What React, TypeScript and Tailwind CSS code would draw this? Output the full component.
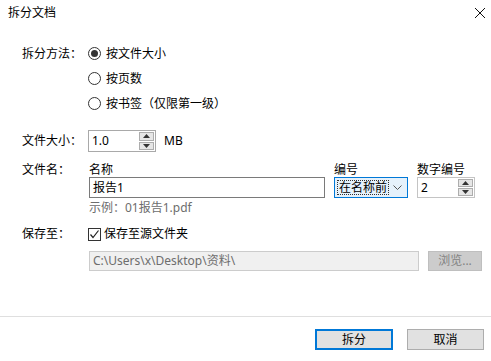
import React from 'react';

const FONT = '"Noto Sans", "Noto Sans CJK SC", sans-serif';

function Radio({ checked, label }: { checked?: boolean; label: string }) {
  return (
    <div className="h-[25px] flex items-center">
      <span className="w-[13px] h-[13px] rounded-full border border-[#333333] bg-white flex items-center justify-center">
        {checked && <span className="w-[7px] h-[7px] rounded-full bg-[#333333]" />}
      </span>
      <span className="ml-[5px] leading-[14px]">{label}</span>
    </div>
  );
}

function SpinButtons() {
  return (
    <div className="w-[16px] h-full flex flex-col gap-[1px] py-[1px] pr-[1px]">
      <div className="flex-1 bg-[#e6e6e6] border border-[#adadad] flex items-center justify-center">
        <svg width="7" height="4" viewBox="0 0 7 4">
          <path d="M0 4 L3.5 0 L7 4 Z" fill="#333" />
        </svg>
      </div>
      <div className="flex-1 bg-[#e6e6e6] border border-[#adadad] flex items-center justify-center">
        <svg width="7" height="4" viewBox="0 0 7 4">
          <path d="M0 0 L3.5 4 L7 0 Z" fill="#333" />
        </svg>
      </div>
    </div>
  );
}

export default function App() {
  return (
    <div
      className="w-[491px] h-[361px] bg-white text-[12px] text-black flex flex-col overflow-hidden"
      style={{ fontFamily: FONT }}
    >
      {/* Title bar */}
      <div className="h-[25px] flex items-center justify-between pl-[8px] pr-[3px]">
        <span className="leading-[14px]">拆分文档</span>
        <svg width="12" height="12" viewBox="0 0 12 12" className="mr-[2px]">
          <path d="M1 1 L11 11 M11 1 L1 11" stroke="#111" strokeWidth="1" />
        </svg>
      </div>

      <div className="flex-1 pl-[22px] pt-[16px]">
        {/* Split method */}
        <div className="flex">
          <div className="w-[66px] h-[25px] flex items-center leading-[14px]">拆分方法：</div>
          <div className="flex flex-col">
            <Radio checked label="按文件大小" />
            <Radio label="按页数" />
            <Radio label="按书签（仅限第一级）" />
          </div>
        </div>

        {/* File size */}
        <div className="flex items-center mt-[14px] h-[22px]">
          <div className="w-[66px] leading-[14px]">文件大小：</div>
          <div className="w-[68px] h-[22px] border border-[#a9a9a9] flex items-center">
            <span className="flex-1 pl-[3px] leading-[14px]">1.0</span>
            <SpinButtons />
          </div>
          <span className="ml-[8px] leading-[14px]">MB</span>
        </div>

        {/* File name */}
        <div className="flex mt-[11px]">
          <div className="w-[66px] h-[14px] flex items-center leading-[14px]">文件名：</div>
          <div className="flex flex-col ml-[1px]">
            <div className="flex gap-[9px]">
              <div className="flex flex-col w-[236px]">
                <div className="h-[14px] leading-[14px]">名称</div>
                <div className="h-[21px] border border-[#7a7a7a] flex items-center pl-[3px] leading-[14px]">报告1</div>
              </div>
              <div className="flex flex-col w-[74px]">
                <div className="h-[14px] leading-[14px]">编号</div>
                <div className="h-[21px] border border-[#0078d7] bg-[#e5f1fb] flex items-center pl-[2px] pr-[5px]">
                  <span className="border border-dotted border-[#333] leading-[13px] px-[1px]">在名称前</span>
                  <svg width="9" height="6" viewBox="0 0 9 6" className="ml-auto">
                    <path d="M0.5 0.5 L4.5 4.5 L8.5 0.5" stroke="#555" strokeWidth="1" fill="none" />
                  </svg>
                </div>
              </div>
              <div className="flex flex-col w-[58px]">
                <div className="h-[14px] leading-[14px]">数字编号</div>
                <div className="h-[21px] border border-[#c4c4c4] flex items-center">
                  <span className="flex-1 pl-[3px] leading-[14px]">2</span>
                  <SpinButtons />
                </div>
              </div>
            </div>
            <div className="mt-[3px] h-[14px] leading-[14px] text-[#6d6d6d]">示例：01报告1.pdf</div>
          </div>
        </div>

        {/* Save to */}
        <div className="flex items-center mt-[9px] h-[20px]">
          <div className="w-[66px] leading-[14px]">保存至：</div>
          <span className="w-[13px] h-[13px] border border-[#333333] bg-white flex items-center justify-center">
            <svg width="11" height="11" viewBox="0 0 11 11">
              <path d="M1.5 5.5 L4 8.5 L9.5 1.5" stroke="#222" strokeWidth="1.2" fill="none" />
            </svg>
          </span>
          <span className="ml-[3px] leading-[14px]">保存至源文件夹</span>
        </div>
        <div className="flex items-center mt-[7px] ml-[67px]">
          <div className="w-[330px] h-[20px] bg-[#f0f0f0] border border-[#cccccc] flex items-center pl-[3px] text-[#6d6d6d] leading-[14px]">
            C:\Users\x\Desktop\资料\
          </div>
          <div className="ml-[9px] w-[54px] h-[20px] bg-[#cccccc] border border-[#bfbfbf] flex items-center justify-center text-[#838383] leading-[14px]">
            浏览...
          </div>
        </div>
      </div>

      {/* Footer */}
      <div className="h-[45px] border-t border-[#dfdfdf] flex justify-end gap-[14px] pr-[7px] pt-[12px]">
        <button className="w-[78px] h-[21px] bg-[#e1e1e1] border-2 border-[#0078d7] flex items-center justify-center leading-[14px]">
          拆分
        </button>
        <button className="w-[77px] h-[21px] bg-[#e1e1e1] border border-[#adadad] flex items-center justify-center leading-[14px]">
          取消
        </button>
      </div>
    </div>
  );
}
